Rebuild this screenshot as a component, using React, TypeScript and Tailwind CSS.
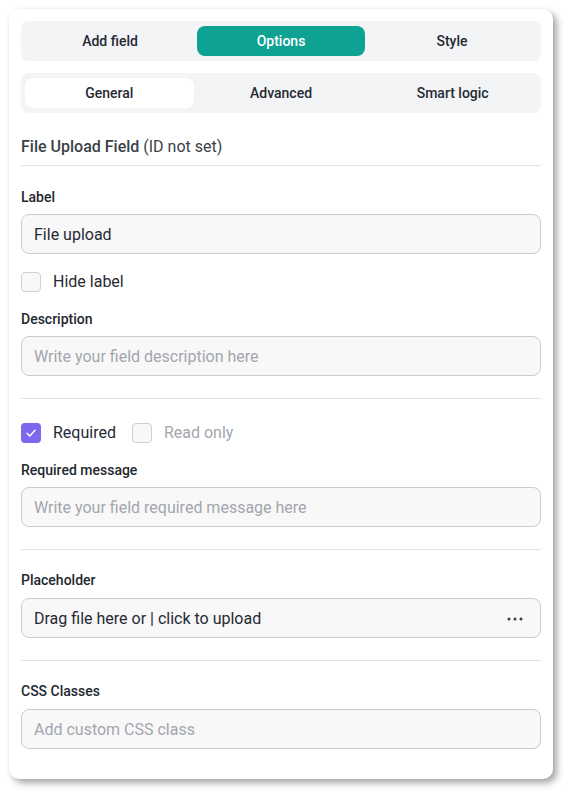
import React from 'react';

function Checkbox({ checked }: { checked?: boolean }) {
  if (checked) {
    return (
      <span className="grid h-5 w-5 shrink-0 place-items-center rounded-[4px] bg-[#7b68ee]">
        <svg width="12" height="12" viewBox="0 0 12 12" fill="none">
          <path d="M2 6.2 4.8 9 10 3.2" stroke="white" strokeWidth="1.5" strokeLinecap="round" strokeLinejoin="round" />
        </svg>
      </span>
    );
  }
  return <span className="block h-5 w-5 shrink-0 rounded-[4px] border border-[#cfd0d4] bg-[#f8f8f9]" />;
}

function Field({ value, placeholder, extra }: { value?: string; placeholder?: string; extra?: React.ReactNode }) {
  return (
    <div className="flex h-10 items-center justify-between rounded-lg border border-[#cbccd1] bg-[#f8f8f9] px-3 pt-px text-base">
      {value ? <span className="text-[#262a33]">{value}</span> : <span className="text-[#a3a6ad]">{placeholder}</span>}
      {extra}
    </div>
  );
}

function Label({ children }: { children: React.ReactNode }) {
  return <div className="text-sm leading-5 font-medium text-[#23272f]">{children}</div>;
}

export default function App() {
  return (
    <div className="min-h-screen bg-white pt-[9px] pl-[9px] font-['Roboto',sans-serif]">
      <div className="w-[544px] rounded-[10px] bg-white px-3 pt-3 pb-[30px] shadow-[4px_4px_7px_rgba(0,0,0,0.35),0_0_3px_rgba(0,0,0,0.06)]">
        {/* Top tabs */}
        <div className="flex h-10 gap-[3px] rounded-lg bg-[#f3f4f6] p-[5px]">
          <div className="grid flex-1 place-items-center pb-px text-sm font-medium text-[#262a33]">Add field</div>
          <div className="grid flex-1 place-items-center rounded-lg bg-[#0ea292] pb-px text-sm font-medium text-white">Options</div>
          <div className="grid flex-1 place-items-center pb-px text-sm font-medium text-[#262a33]">Style</div>
        </div>

        {/* Sub tabs */}
        <div className="mt-3 flex h-10 gap-[3px] rounded-lg bg-[#f3f4f6] px-1 py-[5px]">
          <div className="grid flex-1 place-items-center rounded-lg bg-white pb-px text-sm font-medium text-[#262a33]">General</div>
          <div className="grid flex-1 place-items-center pb-px text-sm font-medium text-[#262a33]">Advanced</div>
          <div className="grid flex-1 place-items-center pb-px text-sm font-medium text-[#262a33]">Smart logic</div>
        </div>

        <div className="mt-[22px] border-b border-[#e3e4e7] pb-[6px] text-base leading-6 text-[#3b3f47]">
          <span className="font-medium">File Upload Field</span> (ID not set)
        </div>

        <div className="mt-[21px]">
          <Label>Label</Label>
          <div className="mt-[7px]">
            <Field value="File upload" />
          </div>
        </div>

        <div className="mt-4 flex items-center gap-3">
          <Checkbox />
          <span className="text-base text-[#262a33]">Hide label</span>
        </div>

        <div className="mt-[15px]">
          <Label>Description</Label>
          <div className="mt-[7px]">
            <Field placeholder="Write your field description here" />
          </div>
        </div>

        <div className="mt-[22px] border-t border-[#e3e4e7]" />

        <div className="mt-[22px] flex items-center gap-3">
          <Checkbox checked />
          <span className="text-base text-[#262a33]">Required</span>
          <span className="ml-1 flex">
            <Checkbox />
          </span>
          <span className="text-base text-[#a3a6ad]">Read only</span>
        </div>

        <div className="mt-[15px]">
          <Label>Required message</Label>
          <div className="mt-[7px]">
            <Field placeholder="Write your field required message here" />
          </div>
        </div>

        <div className="mt-[22px] border-t border-[#e3e4e7]" />

        <div className="mt-[20px]">
          <Label>Placeholder</Label>
          <div className="mt-[8px]">
            <Field
              value="Drag file here or | click to upload"
              extra={
                <svg width="16" height="4" viewBox="0 0 16 4" className="mr-[5px]">
                  <circle cx="2" cy="2" r="1.5" fill="#3b3f47" />
                  <circle cx="8" cy="2" r="1.5" fill="#3b3f47" />
                  <circle cx="14" cy="2" r="1.5" fill="#3b3f47" />
                </svg>
              }
            />
          </div>
        </div>

        <div className="mt-[22px] border-t border-[#e3e4e7]" />

        <div className="mt-[20px]">
          <Label>CSS Classes</Label>
          <div className="mt-[8px]">
            <Field placeholder="Add custom CSS class" />
          </div>
        </div>
      </div>
    </div>
  );
}
